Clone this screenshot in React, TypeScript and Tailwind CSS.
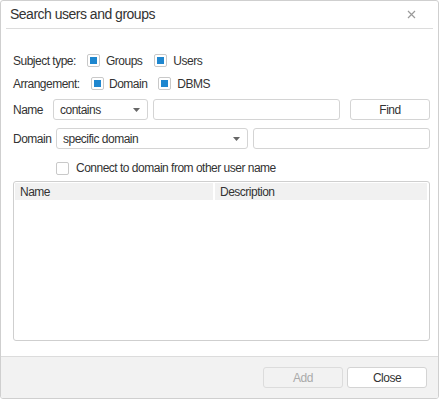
import React from 'react';

// Search users and groups dialog

function Check({ checked = false }: { checked?: boolean }) {
  return (
    <span className="flex h-[13px] w-[13px] shrink-0 items-center justify-center rounded-[2px] border border-[#c9c9c9] bg-white">
      {checked && <span className="h-[7px] w-[7px] bg-[#1f87cf]" />}
    </span>
  );
}

function Arrow() {
  return (
    <svg width="7" height="4" viewBox="0 0 7 4" className="shrink-0">
      <path d="M0 0 H7 L3.5 4 Z" fill="#666" />
    </svg>
  );
}

function Select({ value, className }: { value: string; className: string }) {
  return (
    <div
      className={`flex h-[21px] shrink-0 items-center justify-between rounded-[3px] border border-[#d4d4d4] bg-white pl-[6px] pr-[7px] ${className}`}
    >
      <span>{value}</span>
      <Arrow />
    </div>
  );
}

export default function App() {
  return (
    <div
      className="h-[400px] w-[440px] bg-white text-[12px] tracking-[-0.5px] text-[#333]"
      style={{ fontFamily: '"Liberation Sans", Arial, sans-serif' }}
    >
      <div className="flex h-[399px] w-[439px] flex-col overflow-hidden rounded-[3px] border border-[#cfcfcf]">
        {/* Title bar */}
        <div className="mx-[5px] flex h-[28px] shrink-0 items-center justify-between border-b border-[#dcdcdc] pl-[4px] pr-[17px]">
          <span className="text-[14px] tracking-[-0.5px] text-[#333]">Search users and groups</span>
          <svg width="9" height="9" viewBox="0 0 9 9">
            <path d="M1 1 L8 8 M8 1 L1 8" stroke="#9a9a9a" strokeWidth="1.2" />
          </svg>
        </div>

        {/* Body */}
        <div className="flex flex-1 flex-col pl-[12px] pr-[8px] pt-[25px]">
          <div className="flex h-[13px] items-center">
            <span className="w-[74px] shrink-0">Subject type:</span>
            <Check checked />
            <span className="ml-[6px] mr-[12px]">Groups</span>
            <Check checked />
            <span className="ml-[6px]">Users</span>
          </div>

          <div className="mt-[10px] flex h-[13px] items-center">
            <span className="w-[78px] shrink-0">Arrangement:</span>
            <Check checked />
            <span className="ml-[5px] mr-[11px]">Domain</span>
            <Check checked />
            <span className="ml-[6px]">DBMS</span>
          </div>

          <div className="mt-[9px] flex items-center">
            <span className="w-[40px] shrink-0">Name</span>
            <Select value="contains" className="w-[95px]" />
            <div className="ml-[5px] h-[21px] w-[187px] shrink-0 rounded-[3px] border border-[#d4d4d4] bg-white" />
            <button className="ml-[10px] h-[21px] w-[80px] shrink-0 rounded-[3px] border border-[#d4d4d4] bg-white text-[12px] text-[#333]">
              Find
            </button>
          </div>

          <div className="mt-[8px] flex items-center">
            <span className="w-[43px] shrink-0">Domain</span>
            <Select value="specific domain" className="w-[192px]" />
            <div className="ml-[5px] h-[21px] w-[177px] shrink-0 rounded-[3px] border border-[#d4d4d4] bg-white" />
          </div>

          <div className="mt-[10px] flex items-center pl-[43px]">
            <Check />
            <span className="ml-[7px]">Connect to domain from other user name</span>
          </div>

          {/* List */}
          <div className="mt-[4px] h-[160px] w-[417px] rounded-[3px] border border-[#cfcfcf] bg-white p-px pr-[2px]">
            <div className="flex h-[17px] items-center bg-[#f1f1f1]">
              <span className="w-[198px] pl-[5px]">Name</span>
              <span className="h-full w-[2px] bg-white" />
              <span className="pl-[5px]">Description</span>
            </div>
          </div>
        </div>

        {/* Footer */}
        <div className="flex h-[42px] shrink-0 items-center justify-end gap-[4px] border-t border-[#dcdcdc] bg-[#f2f2f2] pr-[11px]">
          <button className="h-[21px] w-[80px] rounded-[3px] border border-[#dcdcdc] bg-[#f2f2f2] text-[12px] text-[#aaa]">
            Add
          </button>
          <button className="h-[21px] w-[80px] rounded-[3px] border border-[#d4d4d4] bg-white text-[12px] text-[#333]">
            Close
          </button>
        </div>
      </div>
    </div>
  );
}
